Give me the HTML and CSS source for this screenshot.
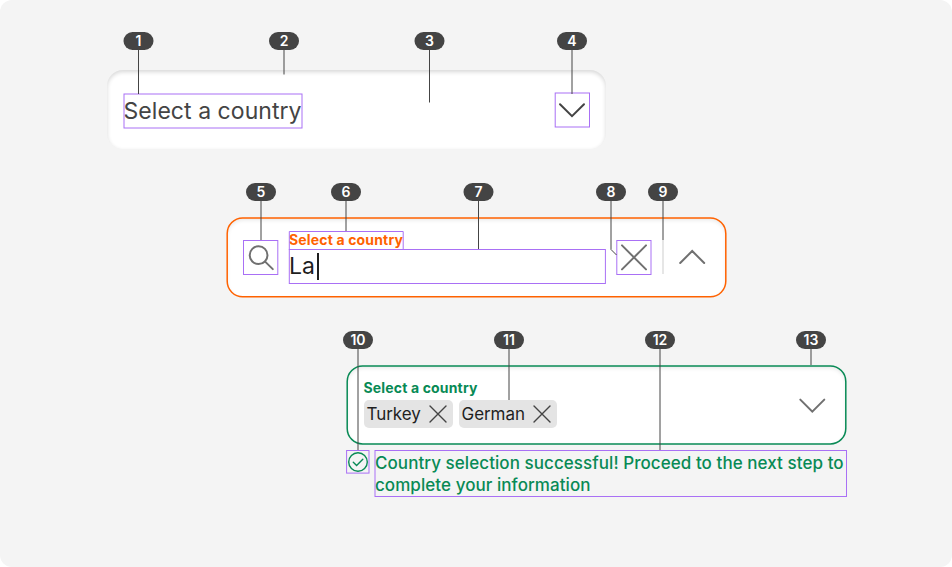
FILE: index.html
```html
<!DOCTYPE html>
<html lang="en">
<head>
<meta charset="utf-8">
<title>Select anatomy</title>
<link rel="stylesheet" href="styles.css">
</head>
<body>
<main class="canvas">
  <section class="field field-default">
    <span class="value">Select a country</span>
    <svg class="icon dark" viewBox="0 0 34 34"><path d="M5 11.2 17 23.2 29 11.2"/></svg>
  </section>

  <section class="field field-focus">
    <svg class="frame" viewBox="0 0 501 81"><rect x="1.2" y=".9" width="498.6" height="78.8" rx="15.5"/></svg>
    <svg class="icon" viewBox="0 0 34 34"><circle cx="15.6" cy="15.2" r="8.9"/><path d="M22.1 21.6 29.8 29.1"/></svg>
    <div class="entry">
      <span class="label">Select a country</span>
      <span class="typed">La<i class="caret"></i></span>
    </div>
    <svg class="icon" viewBox="0 0 34 34"><path d="M5 5.4 29 29.4M29 5.4 5 29.4"/></svg>
    <span class="divider"></span>
    <svg class="icon" viewBox="0 0 34 34"><path d="M5.2 23 17.2 11 29.2 23"/></svg>
  </section>

  <section class="field field-success">
    <svg class="frame" viewBox="0 0 501 81"><rect x="1.2" y=".9" width="498.6" height="78" rx="15.5"/></svg>
    <div class="selection">
      <span class="label">Select a country</span>
      <div class="chips">
        <span class="chip">Turkey<svg viewBox="0 0 18 18"><path d="M1 1 17 17M17 1 1 17"/></svg></span>
        <span class="chip">German<svg viewBox="0 0 18 18"><path d="M1 1 17 17M17 1 1 17"/></svg></span>
      </div>
    </div>
    <svg class="icon" viewBox="0 0 34 34"><path d="M5.3 10.6 17.3 22.6 29.3 10.6"/></svg>
  </section>
  <div class="message">
    <svg viewBox="0 0 22 22"><circle cx="11" cy="11" r="9.3"/><path d="M6.3 11.2 9.6 14.4 15.8 8.2"/></svg>
    <p>Country selection successful! Proceed to the next step to complete your information</p>
  </div>

  <svg class="callouts" viewBox="0 0 952 567">
    <g class="bounds">
      <rect x="124" y="94" width="178" height="34"/>
      <rect x="555.2" y="93" width="34.3" height="34"/>
      <rect x="243.5" y="240.5" width="34.3" height="34"/>
      <path d="M289.3 249.5V231.5H403.2V249.5"/>
      <rect x="289.3" y="249.5" width="316.1" height="34"/>
      <rect x="616.8" y="240.5" width="34.2" height="34"/>
      <rect x="346.6" y="450.5" width="22.4" height="22.6"/>
      <rect x="375" y="450.5" width="471.5" height="46"/>
    </g>
    <g class="leads">
      <path d="M138.5 50V94M284 50V74.5M429.5 50V102.5M572 50V94"/>
      <path d="M261 201V240M346 201V231M478.5 201V249M611 201V249.5L616.5 255M663 201V240"/>
      <path d="M358 349V450M509 349V400M660 349V450M811 349V365"/>
    </g>
    <g class="badges">
      <rect x="123.5" y="32" width="30" height="18" rx="9"/><text x="138.5" y="46">1</text>
      <rect x="269" y="32" width="30" height="18" rx="9"/><text x="284" y="46">2</text>
      <rect x="414.5" y="32" width="30" height="18" rx="9"/><text x="429.5" y="46">3</text>
      <rect x="557" y="32" width="30" height="18" rx="9"/><text x="572" y="46">4</text>
      <rect x="246" y="183" width="30" height="18" rx="9"/><text x="261" y="197">5</text>
      <rect x="331" y="183" width="30" height="18" rx="9"/><text x="346" y="197">6</text>
      <rect x="463.5" y="183" width="30" height="18" rx="9"/><text x="478.5" y="197">7</text>
      <rect x="596" y="183" width="30" height="18" rx="9"/><text x="611" y="197">8</text>
      <rect x="648" y="183" width="30" height="18" rx="9"/><text x="663" y="197">9</text>
      <rect x="343" y="331" width="30" height="18" rx="9"/><text x="358" y="345">10</text>
      <rect x="494" y="331" width="30" height="18" rx="9"/><text x="509" y="345">11</text>
      <rect x="645" y="331" width="30" height="18" rx="9"/><text x="660" y="345">12</text>
      <rect x="796" y="331" width="30" height="18" rx="9"/><text x="811" y="345">13</text>
    </g>
  </svg>
</main>
</body>
</html>
```
FILE: styles.css
```css
* { box-sizing: border-box; }
body { margin: 0; background: #fff; font-family: Inter, sans-serif; }
svg { fill: none; stroke-linecap: round; flex: none; }
.canvas {
  position: relative;
  width: 952px;
  height: 567px;
  padding-top: 70px;
  background: #f4f4f4;
  border-radius: 12px;
  overflow: hidden;
}
.field {
  position: relative;
  display: flex;
  width: 499px;
  height: 80px;
  background: #fff;
  border-radius: 16px;
}
.frame { position: absolute; left: -1px; top: -1px; width: 501px; height: 81px; stroke-width: 1.5; }
.field-default {
  margin-left: 107px;
  padding: 23px 17px 0 16.5px;
  height: 79px;
  justify-content: space-between;
  box-shadow: inset 0 2px 4px rgba(0, 0, 0, .16);
}
.value { font-size: 23px; line-height: 36px; letter-spacing: .05px; color: #444; }
.icon { width: 34px; height: 34px; stroke: #707070; stroke-width: 2; }
.icon.dark { stroke: #444; }
.field-focus {
  margin: 69px 0 0 227px;
  height: 79px;
  padding: 22px 16px 0;
  box-shadow: inset 0 2px 4px rgba(0, 0, 0, .1);
}
.field-focus .frame { stroke: #ff6200; }
.entry { width: 317px; margin: -9px 11px 0 12px; display: flex; flex-direction: column; }
.label { font-size: 14px; font-weight: 700; line-height: 18px; letter-spacing: .16px; }
.field-focus .label { color: #ff6200; }
.typed { display: flex; align-items: center; font-size: 23px; line-height: 35px; color: #1f1f1f; }
.caret { width: 2px; height: 27px; background: #1f1f1f; margin-left: 2px; }
.divider { width: 2px; height: 34px; margin: 0 11px; background: #e6e6e6; }
.field-success {
  margin: 69px 0 0 347px;
  height: 78px;
  padding: 13px 17px 0 16.5px;
  justify-content: space-between;
  box-shadow: inset 0 2px 4px rgba(0, 0, 0, .1);
}
.field-success .frame { stroke: #088a55; }
.field-success .label { display: block; color: #088a55; }
.field-success .icon { margin-top: 10px; }
.chips { display: flex; gap: 6px; margin-top: 3px; }
.chip {
  display: flex;
  align-items: center;
  justify-content: space-between;
  width: 89px;
  height: 28px;
  padding: 0 5.5px 0 3px;
  border-radius: 5px;
  background: #e4e4e4;
  color: #1f1f1f;
  font-size: 17px;
  line-height: 30px;
  letter-spacing: -.05px;
}
.chip + .chip { width: 98px; }
.chip svg { width: 18px; height: 18px; stroke: #444; stroke-width: 1.4; }
.message { display: flex; gap: 6px; margin: 7px 0 0 347px; color: #088a55; }
.message svg { width: 22px; height: 22px; stroke: #088a55; stroke-width: 1.4; }
.message p { margin: 1px 0 0; width: 480px; font-size: 17px; font-weight: 500; line-height: 22px; letter-spacing: .06px; }
.callouts { position: absolute; inset: 0; width: 952px; height: 567px; }
.bounds { stroke: #a970f5; stroke-width: 1; }
.leads { stroke: #444; stroke-width: 1; stroke-linecap: butt; }
.badges { fill: #444; }
.badges text { fill: #fff; font-size: 14px; font-weight: 600; text-anchor: middle; }
```
